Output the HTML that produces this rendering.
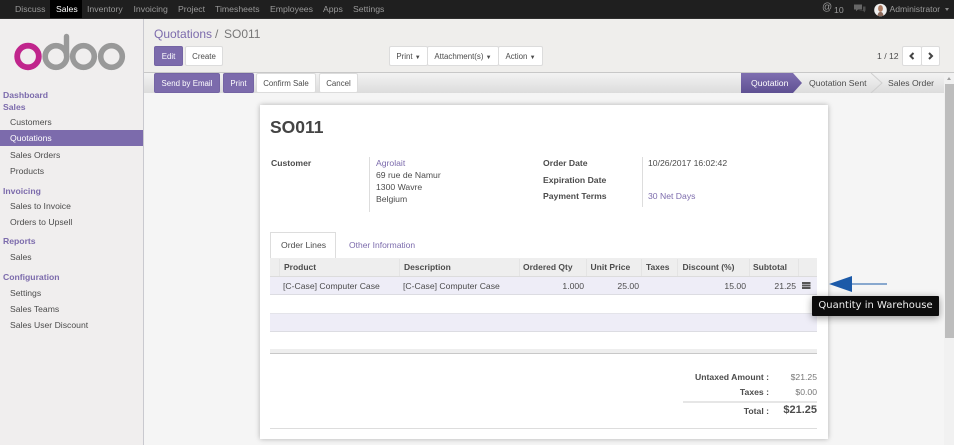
<!DOCTYPE html>
<html><head><meta charset="utf-8"><style>
html,body{margin:0;padding:0}
body{width:954px;height:445px;overflow:hidden;position:relative;background:#f5f5f5;font-family:"Liberation Sans",sans-serif;font-size:8.65px;color:#4c4c4c}
.a,.t{position:absolute;white-space:nowrap}
.t{line-height:12px}
.n{color:#9a9a9a;top:3px;font-size:8.7px}
.p{color:#7c6bac}
.b{font-weight:bold}
.g{font-weight:bold;color:#7c6bac}
.btn{position:absolute;top:0;height:20px;line-height:19px;text-align:center;box-sizing:border-box;background:#fff;border:1px solid #dcdcdc;border-radius:2px;color:#4c4c4c;font-size:7.9px}
.pr{background:#7c6bac;border-color:#7464a4;color:#fff}
.r{text-align:right}
.th{top:261px;font-weight:bold;color:#4c4c4c;font-size:8.5px}
.sep{position:absolute;top:259px;width:1px;height:17px;background:#e4e4e4}
</style></head><body>
<div class="a" style="left:0;top:0;width:954px;height:18px;background:#1f1f1f;border-bottom:1px solid #2e2e2e"></div>
<div class="a" style="left:50px;top:0;width:32px;height:18px;background:#000"></div>
<span class="t n" style="left:15px">Discuss</span>
<span class="t n" style="left:56px;color:#fff">Sales</span>
<span class="t n" style="left:87px">Inventory</span>
<span class="t n" style="left:133.500px">Invoicing</span>
<span class="t n" style="left:178px">Project</span>
<span class="t n" style="left:215px">Timesheets</span>
<span class="t n" style="left:270px">Employees</span>
<span class="t n" style="left:323px">Apps</span>
<span class="t n" style="left:353px">Settings</span>
<span class="t n" style="left:822px;top:2px;font-size:10px">@</span>
<span class="t n" style="left:834px;top:4px">10</span>
<svg class="a" style="left:854px;top:4px" width="12" height="9" viewBox="0 0 12 9"><path d="M0 .5h8v5H4L2 7.200V5.500H0z" fill="#666"/><path d="M9 2.500h2.500v4.300H11V8.500L9 6.800H5.500V6.300H9z" fill="#4e4e4e"/></svg>
<svg class="a" style="left:874px;top:3px" width="13" height="14" viewBox="0 0 13 14"><circle cx="6.500" cy="7" r="6.300" fill="#efefef"/><ellipse cx="6.500" cy="5.500" rx="2.400" ry="3.400" fill="#ad7a60"/><path d="M3.500 13c.3-3 1.300-4 3-4s2.700 1 3 4z" fill="#8a6a5c"/></svg>
<span class="t n" style="left:889.500px;top:3px;font-size:8.6px">Administrator</span>
<span class="a" style="left:945px;top:8px;width:0;height:0;border:2.500px solid transparent;border-top:3px solid #888;border-bottom:0"></span>

<div class="a" style="left:0;top:19px;width:143px;height:426px;background:#f0eeee;border-right:1px solid #c9c9cf"></div>
<svg class="a" style="left:14px;top:33px" width="113" height="38" viewBox="0 0 113 38">
<circle cx="14" cy="23.500" r="10.800" fill="none" stroke="#c0258c" stroke-width="5.800"/>
<circle cx="42" cy="23.500" r="10.800" fill="none" stroke="#999" stroke-width="5.600"/>
<path d="M52.500 23V3.500" stroke="#999" stroke-width="5.400" stroke-linecap="round" fill="none"/>
<circle cx="69.500" cy="23.500" r="10.800" fill="none" stroke="#999" stroke-width="5.600"/>
<circle cx="97.500" cy="23.500" r="10.800" fill="none" stroke="#999" stroke-width="5.600"/>
</svg>
<span class="t g" style="left:3px;top:89px">Dashboard</span>
<span class="t g" style="left:3px;top:101px">Sales</span>
<span class="t" style="left:10px;top:116px">Customers</span>
<div class="a" style="left:0;top:130px;width:143px;height:16px;background:#7c6bac"></div>
<span class="t" style="left:10px;top:132px;color:#fff">Quotations</span>
<span class="t" style="left:10px;top:149px">Sales Orders</span>
<span class="t" style="left:10px;top:165px">Products</span>
<span class="t g" style="left:3px;top:185px">Invoicing</span>
<span class="t" style="left:10px;top:200px">Sales to Invoice</span>
<span class="t" style="left:10px;top:216px">Orders to Upsell</span>
<span class="t g" style="left:3px;top:235px">Reports</span>
<span class="t" style="left:10px;top:251px">Sales</span>
<span class="t g" style="left:3px;top:271px">Configuration</span>
<span class="t" style="left:10px;top:287px">Settings</span>
<span class="t" style="left:10px;top:303px">Sales Teams</span>
<span class="t" style="left:10px;top:319px">Sales User Discount</span>

<div class="a" style="left:144px;top:19px;width:810px;height:53px;background:#efeeec;border-bottom:1px solid #c8c8c8"></div>
<span class="t p" style="left:154px;top:27px;font-size:12px;line-height:15px">Quotations</span>
<span class="t" style="left:215px;top:27px;font-size:12px;line-height:15px;color:#777">/</span>
<span class="t" style="left:224px;top:27px;font-size:12px;line-height:15px;color:#777">SO011</span>
<div class="a" style="left:154px;top:46px"><div class="btn pr" style="left:0;width:29px">Edit</div><div class="btn" style="left:31px;width:38px">Create</div></div>
<div class="a" style="left:389px;top:46px"><div class="btn" style="left:0;width:39px">Print <span style="font-size:6px">▼</span></div><div class="btn" style="left:38px;width:72px">Attachment(s) <span style="font-size:6px">▼</span></div><div class="btn" style="left:109px;width:45px">Action <span style="font-size:6px">▼</span></div></div>
<span class="t" style="left:877px;top:50px">1 / 12</span>
<div class="a" style="left:902px;top:46px"><div class="btn" style="left:0;width:20px"></div><div class="btn" style="left:19px;width:19px"></div></div>
<svg class="a" style="left:902px;top:46px" width="38" height="20"><path d="M11.500 7l-3 3 3 3M27 7l3 3-3 3" fill="none" stroke="#444" stroke-width="2"/></svg>

<div class="a" style="left:144px;top:73px;width:800px;height:20px;background:linear-gradient(#f3f3f3,#dcdcdc)"></div>
<div class="a" style="left:154px;top:73px"><div class="btn pr" style="left:0;width:66px">Send by Email</div><div class="btn pr" style="left:69px;width:31px">Print</div><div class="btn" style="left:102px;width:60px">Confirm Sale</div><div class="btn" style="left:165px;width:39px">Cancel</div></div>
<svg class="a" style="left:741px;top:73px" width="203" height="20"><defs><linearGradient id="q" x1="0" y1="0" x2="0" y2="1"><stop offset="0" stop-color="#7f6fb0"/><stop offset="1" stop-color="#5f5193"/></linearGradient></defs><path d="M0 0h52l9 10-9 10H0z" fill="url(#q)"/><path d="M130 0l11 10-11 10" fill="none" stroke="#cfcfcf"/></svg>
<span class="t" style="left:751px;top:77px;color:#fff">Quotation</span>
<span class="t" style="left:809px;top:77px">Quotation Sent</span>
<span class="t" style="left:888px;top:77px">Sales Order</span>

<div class="a" style="left:260px;top:105px;width:568px;height:334px;background:#fff;box-shadow:0 0 5px rgba(0,0,0,.28)"></div>
<span class="t b" style="left:270px;top:117px;font-size:17.500px;line-height:21px;color:#444">SO011</span>
<span class="t b" style="left:271px;top:156.500px">Customer</span>
<div class="a" style="left:369px;top:157px;width:1px;height:55px;background:#ddd"></div>
<span class="t p" style="left:376px;top:157px">Agrolait</span>
<span class="t" style="left:376px;top:169px">69 rue de Namur</span>
<span class="t" style="left:376px;top:181px">1300 Wavre</span>
<span class="t" style="left:376px;top:193px">Belgium</span>
<span class="t b" style="left:543px;top:156.500px">Order Date</span>
<span class="t b" style="left:543px;top:173.500px">Expiration Date</span>
<span class="t b" style="left:543px;top:190px">Payment Terms</span>
<div class="a" style="left:642px;top:157px;width:1px;height:50px;background:#ddd"></div>
<span class="t" style="left:648px;top:157px">10/26/2017 16:02:42</span>
<span class="t p" style="left:648px;top:190px">30 Net Days</span>

<div class="a" style="left:270px;top:232px;width:66px;height:27px;box-sizing:border-box;border:1px solid #ddd;border-bottom:0;background:#fff"></div>
<span class="t" style="left:281px;top:239px">Order Lines</span>
<span class="t p" style="left:349px;top:239px;font-size:8.500px">Other Information</span>

<div class="a" style="left:270px;top:258px;width:547px;height:19px;background:#eeeeee;border-bottom:1px solid #dcdcdc;box-sizing:border-box"></div>
<i class="sep" style="left:279px"></i><i class="sep" style="left:399px"></i><i class="sep" style="left:519px"></i><i class="sep" style="left:586px"></i><i class="sep" style="left:641px"></i><i class="sep" style="left:677px"></i><i class="sep" style="left:749px"></i><i class="sep" style="left:798px"></i>
<span class="t th" style="left:284px">Product</span>
<span class="t th" style="left:404px">Description</span>
<span class="t th" style="left:523px">Ordered Qty</span>
<span class="t th" style="left:590.500px">Unit Price</span>
<span class="t th" style="left:646px">Taxes</span>
<span class="t th" style="left:682.500px">Discount (%)</span>
<span class="t th" style="left:753px">Subtotal</span>
<div class="a" style="left:270px;top:277px;width:547px;height:18px;background:#eeedf7;border-bottom:1px solid #dcdce2;box-sizing:border-box"></div>
<span class="t" style="left:283px;top:279.500px">[C-Case] Computer Case</span>
<span class="t" style="left:403px;top:279.500px">[C-Case] Computer Case</span>
<span class="t r" style="right:370px;top:279.500px">1.000</span>
<span class="t r" style="right:315px;top:279.500px">25.00</span>
<span class="t r" style="right:208px;top:279.500px">15.00</span>
<span class="t r" style="right:158px;top:279.500px">21.25</span>
<svg class="a" style="left:802px;top:282px" width="9" height="8"><path d="M0 0h8.500v2H0zM0 2.500h8.500v2H0zM0 5h8.500v2H0z" fill="#555"/></svg>
<div class="a" style="left:270px;top:313px;width:547px;height:19px;background:#eeedf7;border-top:1px solid #e4e4ea;border-bottom:1px solid #dcdce2;box-sizing:border-box"></div>
<div class="a" style="left:270px;top:349px;width:547px;height:5px;background:#eeeeee;border-bottom:1px solid #c8c8c8;box-sizing:border-box"></div>

<svg class="a" style="left:828px;top:274px" width="62" height="22"><path d="M1 10l23-8v7.500h35v1H24V18z" fill="#1c5aa8"/></svg>
<div class="a" style="left:812px;top:296px;width:127px;height:20px;background:#0c0c0c;border-radius:1px;box-shadow:0 2px 8px rgba(0,0,0,.4);color:#eee;font-family:'DejaVu Sans',sans-serif;font-size:10px;line-height:20px;text-align:center">Quantity in Warehouse</div>

<span class="t b r" style="right:185px;top:371px">Untaxed Amount :</span><span class="t r" style="right:137px;top:371px;color:#777">$21.25</span>
<span class="t b r" style="right:185px;top:386px">Taxes :</span><span class="t r" style="right:137px;top:386px;color:#777">$0.00</span>
<div class="a" style="left:683px;top:401px;width:134px;height:2px;background:#e6e6e6"></div>
<span class="t b r" style="right:185px;top:405px">Total :</span><span class="t b r" style="right:137px;top:404px;font-size:11px;color:#4c4c4c">$21.25</span>
<div class="a" style="left:270px;top:428px;width:547px;height:1px;background:#ddd"></div>

<div class="a" style="left:944px;top:73px;width:10px;height:372px;background:#f1f1f1"></div>
<div class="a" style="left:945px;top:84px;width:9px;height:254px;background:#bdbdbd"></div>
<span class="a" style="left:947px;top:77px;width:0;height:0;border:2.500px solid transparent;border-bottom:3px solid #a0a0a0;border-top:0"></span>
</body></html>
